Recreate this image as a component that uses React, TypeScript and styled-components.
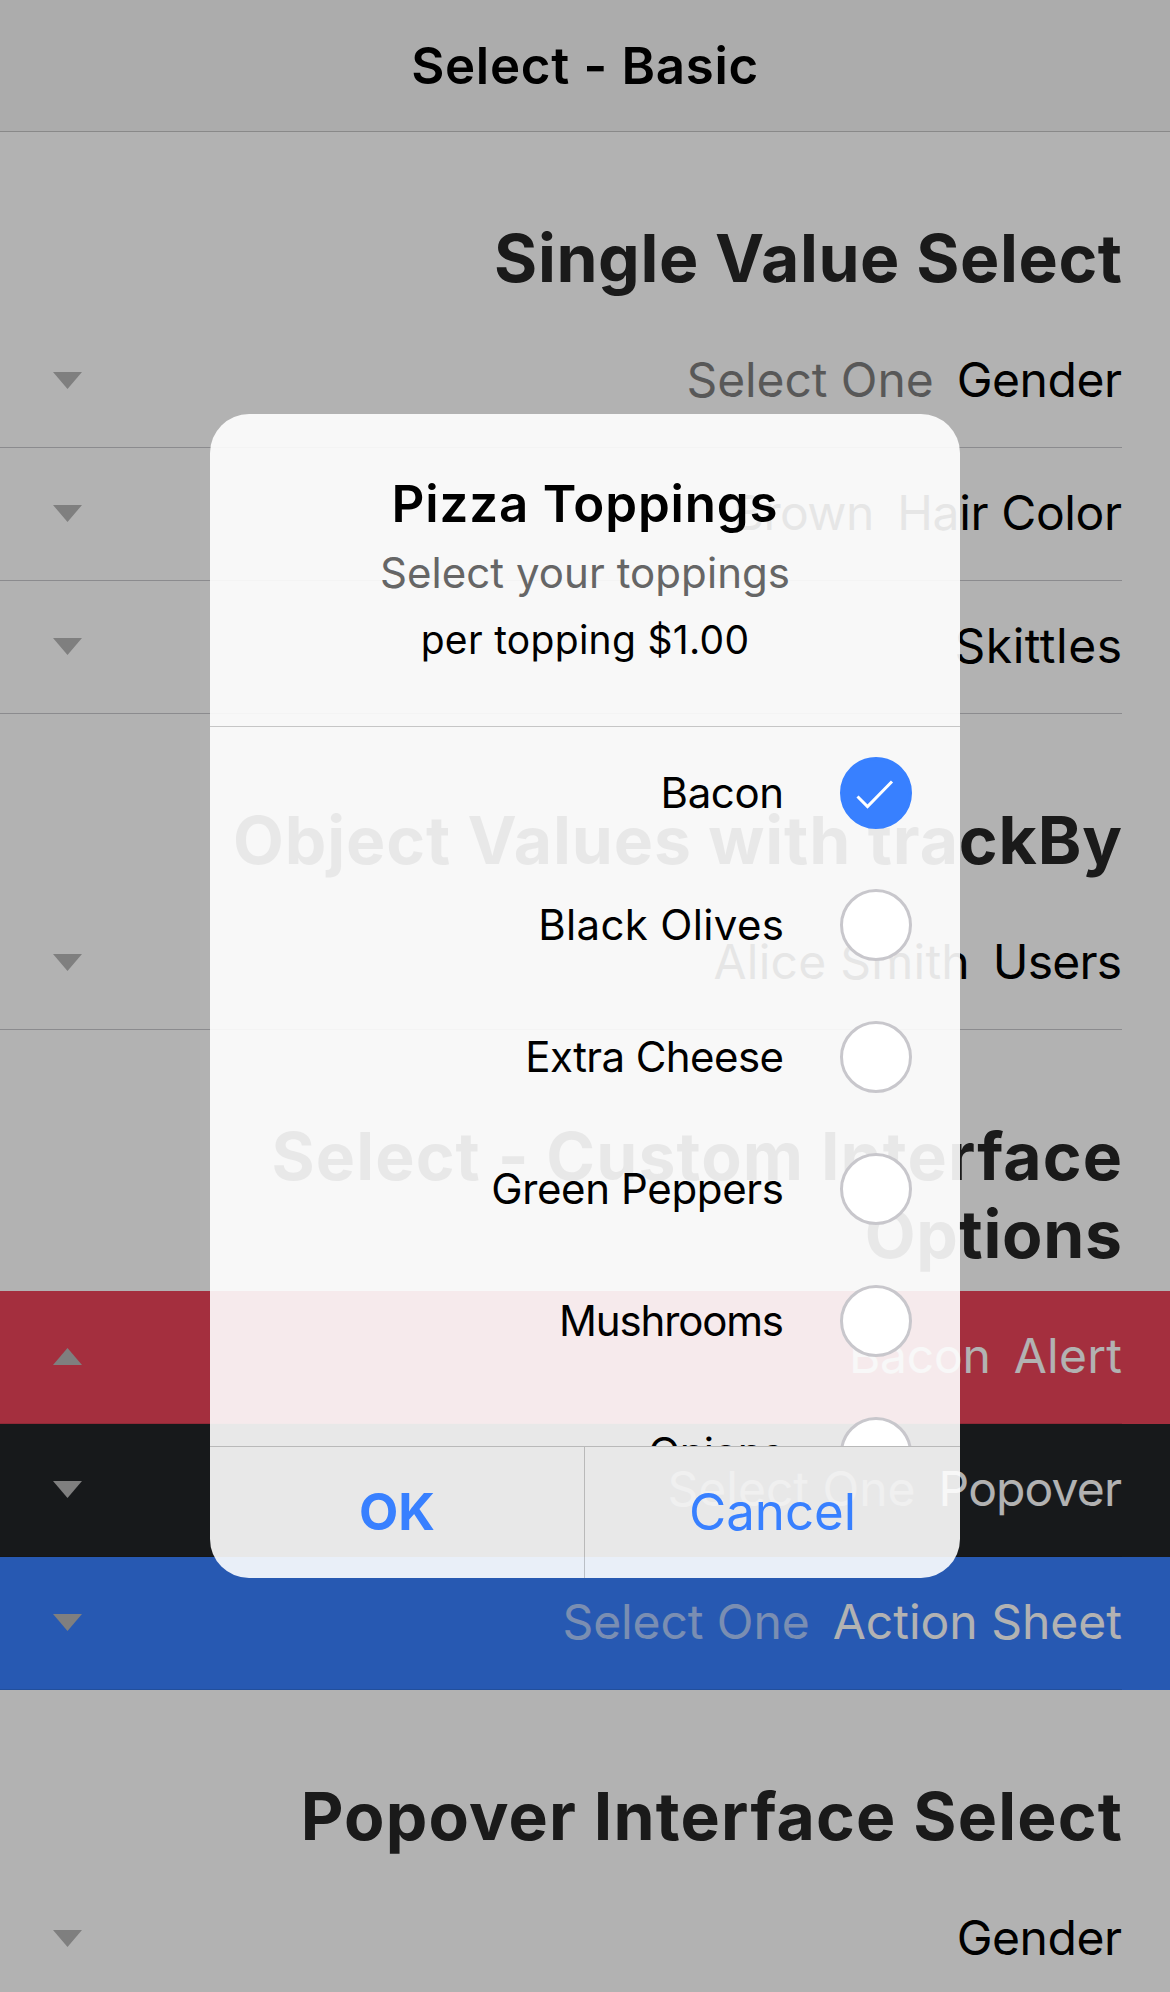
import React from "react";
import styled, { createGlobalStyle } from "styled-components";

const GlobalStyle = createGlobalStyle`
  * { box-sizing: border-box; }
  html, body { margin: 0; padding: 0; }
  body { font-family: Inter, "Liberation Sans", sans-serif; background: #b2b2b2; overflow: hidden; }
`;

const Page = styled.div`
  position: relative;
  width: 1170px;
  height: 1992px;
  overflow: hidden;
  background: #fff;
  color: #000;
`;

const Toolbar = styled.header`
  display: flex;
  align-items: center;
  justify-content: center;
  height: 132px;
  background: #f7f7f7;
  border-bottom: 1px solid #c4c4c4;
`;

const ToolbarTitle = styled.h1`
  margin: 0;
  font-size: 51px;
  line-height: 62px;
  font-weight: 600;
  letter-spacing: 0.7px;
`;

const ListHeader = styled.h2`
  margin: 0;
  padding: 87px 48px 18px 200px;
  font-size: 66px;
  line-height: 78px;
  font-weight: 700;
  text-align: right;
  color: #262626;
`;

const Tracked = styled.span<{ $tracking?: number }>`
  letter-spacing: ${(p) => p.$tracking ?? 0}px;
  margin-right: ${(p) => -(p.$tracking ?? 0)}px;
`;

const themes = {
  plain: { bg: "#fff", fg: "#000", line: "#c8c7cc", placeholder: 0.5 },
  danger: { bg: "#eb445a", fg: "#fff", line: "#cf3c4f", placeholder: 0.5 },
  dark: { bg: "#222428", fg: "#fff", line: "#1e2023", placeholder: 0.5 },
  primary: { bg: "#3880ff", fg: "#fff", line: "#3171e0", placeholder: 0.6 },
};
type Theme = keyof typeof themes;

const Item = styled.div<{ $theme: Theme }>`
  display: flex;
  height: 133px;
  padding-right: 48px;
  background: ${(p) => themes[p.$theme].bg};
  color: ${(p) => themes[p.$theme].fg};
`;

const ItemInner = styled.div<{ $theme: Theme }>`
  flex: 1;
  display: flex;
  align-items: center;
  justify-content: space-between;
  padding-left: 53px;
  border-bottom: 1px solid ${(p) => themes[p.$theme].line};
`;

const Arrow = styled.svg<{ $up?: boolean }>`
  width: 29px;
  height: 17px;
  margin-bottom: 1px;
  fill: #b6b6b6;
  transform: ${(p) => (p.$up ? "rotate(180deg)" : "none")};
`;

const ItemText = styled.div`
  display: flex;
  gap: 23px;
  padding-bottom: 2px;
  font-size: 48px;
  line-height: 58px;
  white-space: pre;
`;

const Value = styled(Tracked)<{ $opacity: number }>`
  opacity: ${(p) => p.$opacity};
`;

const Backdrop = styled.div`
  position: absolute;
  inset: 0;
  background: rgba(0, 0, 0, 0.3);
`;

const Alert = styled.div`
  position: absolute;
  left: 210px;
  top: 414px;
  width: 750px;
  height: 1164px;
  display: flex;
  flex-direction: column;
  border-radius: 39px;
  overflow: hidden;
  background: rgba(255, 255, 255, 0.9);
`;

const AlertHead = styled.div`
  flex: none;
  height: 313px;
  padding-top: 59px;
  text-align: center;
  border-bottom: 1px solid rgba(0, 0, 0, 0.2);
`;

const AlertTitle = styled.h2`
  margin: 0;
  font-size: 51px;
  line-height: 62px;
  font-weight: 600;
  letter-spacing: 0.85px;
`;

const AlertSubtitle = styled.h3`
  margin: 13px 0 0;
  font-size: 42px;
  line-height: 50px;
  font-weight: 400;
  letter-spacing: 0.06px;
  color: #666;
`;

const AlertMessage = styled.p`
  margin: 18px 0 0;
  font-size: 39px;
  line-height: 48px;
  letter-spacing: 0.3px;
`;

const Options = styled.div`
  flex: 1;
  min-height: 0;
  overflow: hidden;
`;

const Option = styled.div`
  display: flex;
  align-items: center;
  justify-content: flex-end;
  gap: 56px;
  height: 132px;
  padding-right: 48px;
  font-size: 42px;
  line-height: 50px;
`;

const Check = styled.span<{ $on?: boolean }>`
  display: flex;
  width: 72px;
  height: 72px;
  border-radius: 50%;
  border: 3px solid ${(p) => (p.$on ? "#3880ff" : "#c8c7cc")};
  background: ${(p) => (p.$on ? "#3880ff" : "#fff")};

  svg {
    width: 66px;
    height: 66px;
  }
`;

const Buttons = styled.div`
  flex: none;
  display: grid;
  grid-template-columns: 375px 375px;
  height: 132px;
  border-top: 1px solid rgba(0, 0, 0, 0.2);
`;

const Button = styled.button<{ $bold?: boolean }>`
  padding: 0 0 2px;
  border: 0;
  border-right: ${(p) => (p.$bold ? "1px solid rgba(0, 0, 0, 0.2)" : "0")};
  background: transparent;
  color: #3880ff;
  font-family: inherit;
  font-size: 51px;
  line-height: 62px;
  font-weight: ${(p) => (p.$bold ? 700 : 400)};
`;

interface RowProps {
  label: string;
  tracking?: number;
  value?: string;
  valueTracking?: number;
  placeholder?: string;
  theme?: Theme;
  open?: boolean;
}

function SelectRow({ label, tracking, value, valueTracking, placeholder, theme = "plain", open }: RowProps) {
  return (
    <Item $theme={theme}>
      <ItemInner $theme={theme}>
        <Arrow viewBox="0 0 29 17" $up={open}>
          <path d="M0 0H29L14.5 17Z" />
        </Arrow>
        <ItemText>
          {(value || placeholder) && (
            <Value $opacity={value ? 1 : themes[theme].placeholder} $tracking={valueTracking}>
              {value || placeholder}
            </Value>
          )}
          <Tracked $tracking={tracking}>{label}</Tracked>
        </ItemText>
      </ItemInner>
    </Item>
  );
}

const toppings = [
  { name: "Bacon", tracking: -0.4 },
  { name: "Black Olives", tracking: 0.35 },
  { name: "Extra Cheese", tracking: -0.58 },
  { name: "Green Peppers", tracking: -0.35 },
  { name: "Mushrooms", tracking: -1.15 },
  { name: "Onions", tracking: -0.7 },
];

export default function App() {
  return (
    <>
      <GlobalStyle />
      <Page>
        <Toolbar>
          <ToolbarTitle>Select - Basic</ToolbarTitle>
        </Toolbar>
        <ListHeader>
          <Tracked $tracking={0.6}>Single Value Select</Tracked>
        </ListHeader>
        <SelectRow label="Gender" tracking={-0.45} placeholder="Select One" valueTracking={-0.1} />
        <SelectRow label="Hair Color" tracking={-0.38} value="Brown" valueTracking={-0.7} />
        <SelectRow label="Skittles" tracking={0.5} />
        <ListHeader>
          <Tracked $tracking={0.88}>Object Values with trackBy</Tracked>
        </ListHeader>
        <SelectRow label="Users" tracking={-0.8} value="Alice Smith" valueTracking={0.25} />
        <ListHeader>
          <Tracked $tracking={1.12}>Select - Custom Interface</Tracked>{" "}
          <Tracked $tracking={0.7}>Options</Tracked>
        </ListHeader>
        <SelectRow label="Alert" tracking={0.25} value="Bacon" valueTracking={-0.3} theme="danger" open />
        <SelectRow label="Popover" tracking={-0.85} placeholder="Select One" theme="dark" />
        <SelectRow label="Action Sheet" placeholder="Select One" valueTracking={-0.1} theme="primary" />
        <ListHeader>
          <Tracked $tracking={1.18}>Popover Interface Select</Tracked>
        </ListHeader>
        <SelectRow label="Gender" tracking={-0.45} />
        <Backdrop />
        <Alert role="alertdialog">
          <AlertHead>
            <AlertTitle>Pizza Toppings</AlertTitle>
            <AlertSubtitle>Select your toppings</AlertSubtitle>
            <AlertMessage>per topping $1.00</AlertMessage>
          </AlertHead>
          <Options>
            {toppings.map(({ name, tracking }, i) => (
              <Option key={name}>
                <Tracked $tracking={tracking}>{name}</Tracked>
                <Check $on={i === 0}>
                  {i === 0 && (
                    <svg viewBox="0 0 66 66" fill="none" stroke="#fff" strokeWidth="3">
                      <path d="M14.5 36.5L24.5 46.5L49 21.5" />
                    </svg>
                  )}
                </Check>
              </Option>
            ))}
          </Options>
          <Buttons>
            <Button $bold>OK</Button>
            <Button>Cancel</Button>
          </Buttons>
        </Alert>
      </Page>
    </>
  );
}
